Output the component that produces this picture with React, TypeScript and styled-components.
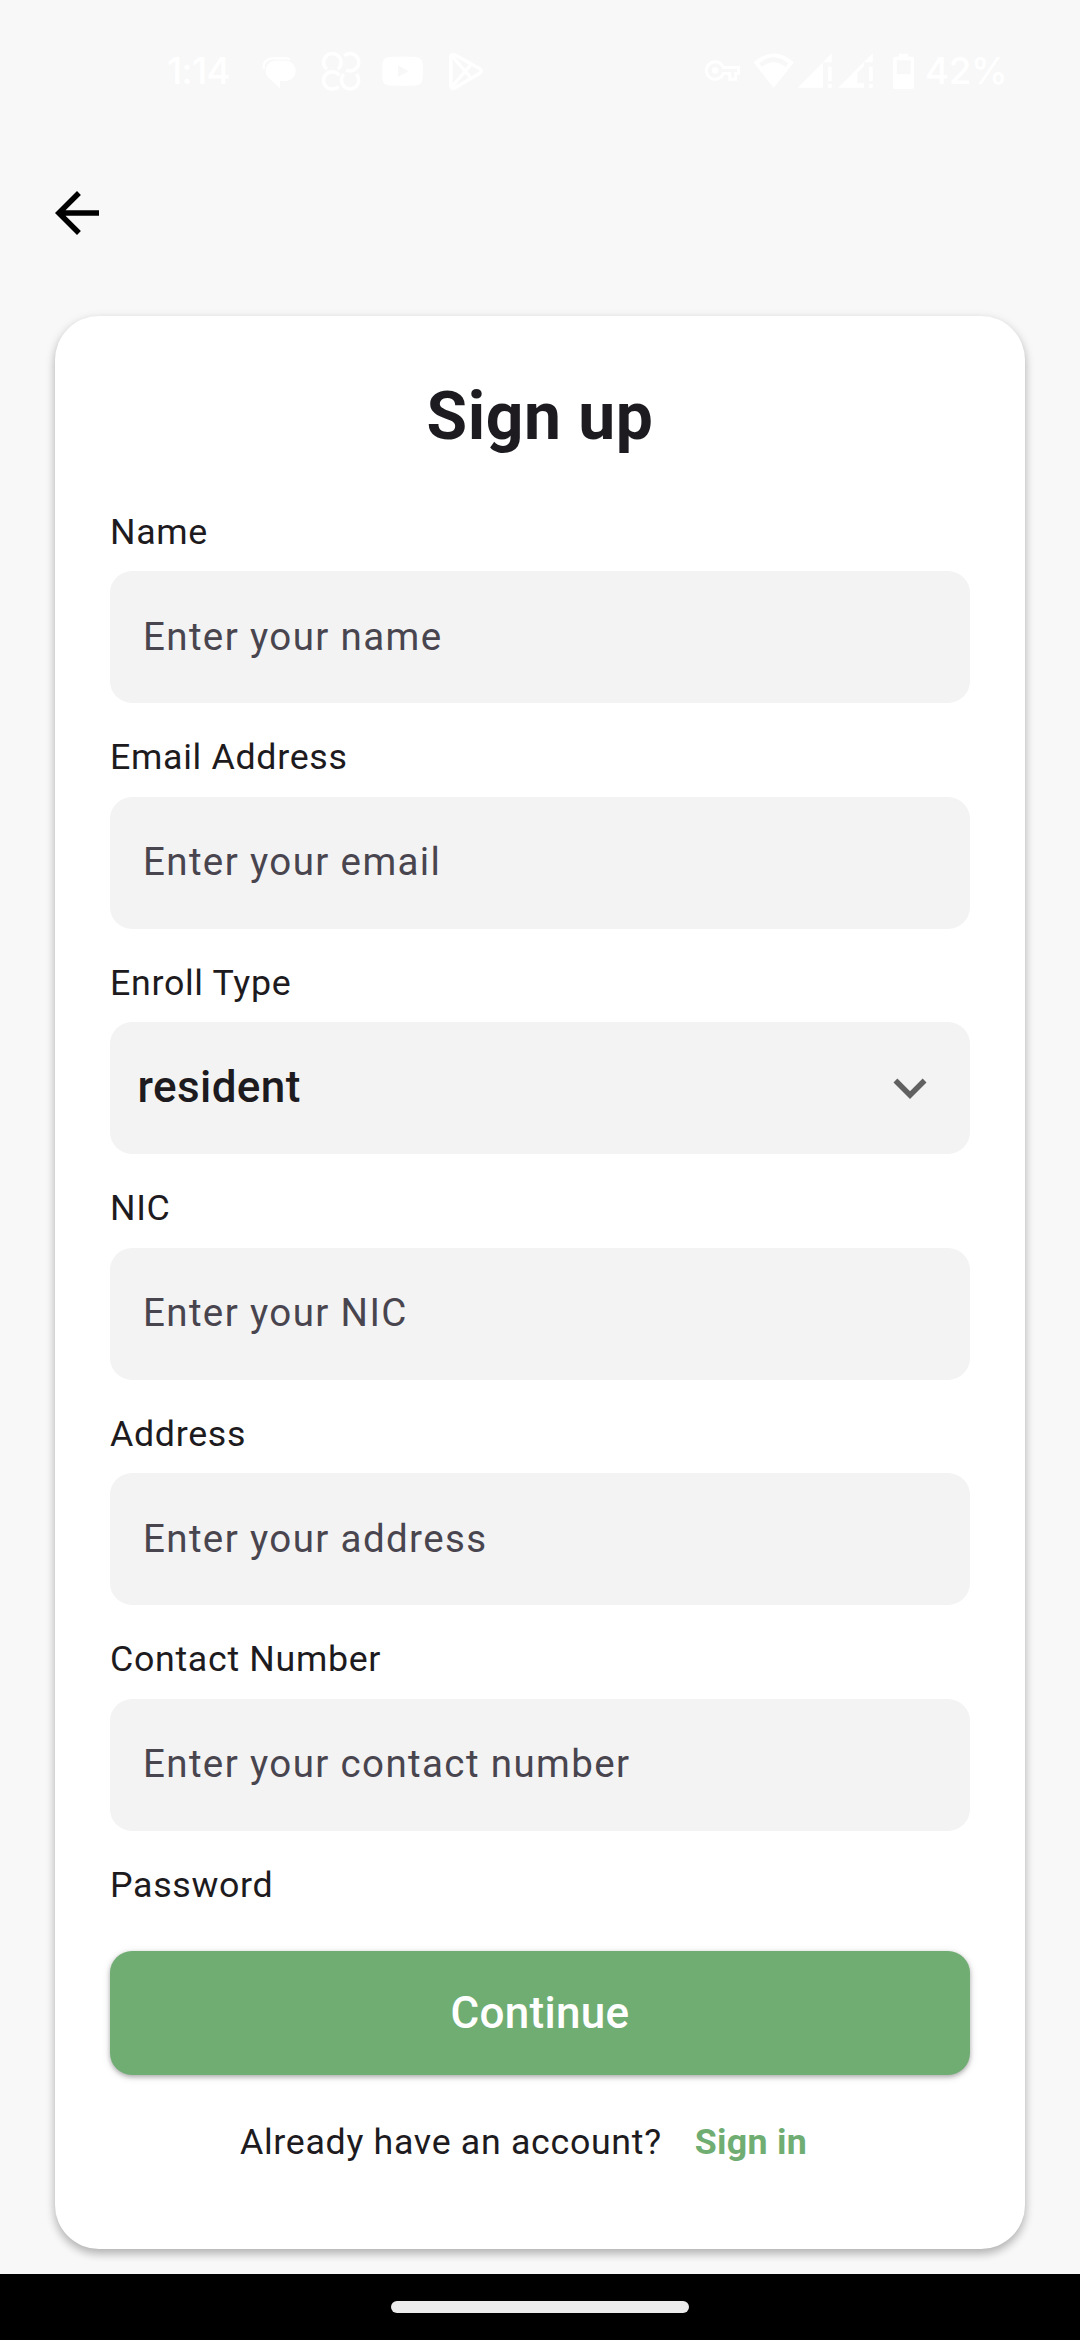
import React from "react";
import styled, { createGlobalStyle } from "styled-components";

const GlobalStyle = createGlobalStyle`
  *, *::before, *::after { box-sizing: border-box; }
  html, body { margin: 0; padding: 0; background: #f8f8f8; }
  body { font-family: Roboto, "Noto Sans", sans-serif; color: #1d1b20; }
`;

const Screen = styled.div`
  width: 1080px;
  height: 2340px;
  display: flex;
  flex-direction: column;
  background: #f8f8f8;
  overflow: hidden;
`;

const StatusBar = styled.header`
  height: 142px;
  flex: none;
  padding: 51px 77px 0 167px;
  display: flex;
  justify-content: space-between;
  align-items: flex-start;
  color: #ffffff;
`;

const StatusGroup = styled.div`
  display: flex;
  height: 40px;
`;

const StatusText = styled.span<{ $width: number; $inset?: number; $spacing: number }>`
  width: ${(p) => p.$width}px;
  padding-left: ${(p) => p.$inset ?? 0}px;
  font-family: Inter, Roboto, sans-serif;
  font-size: 37px;
  font-weight: 500;
  line-height: 40px;
  letter-spacing: ${(p) => p.$spacing}px;
  white-space: nowrap;
`;

const StatusIcon = styled.svg<{ $gap: number }>`
  display: block;
  flex: none;
  height: 40px;
  margin-left: ${(p) => p.$gap}px;
  fill: currentColor;
  overflow: visible;
`;

const AppBar = styled.nav`
  height: 173.5px;
  flex: none;
  padding: 38px 44px 0;
`;

const BackButton = styled.button`
  display: block;
  width: 66px;
  height: 66px;
  padding: 0;
  border: 0;
  background: none;
  color: #000000;
`;

const Icon = styled.svg`
  display: block;
  width: 66px;
  height: 66px;
  fill: currentColor;
`;

const Card = styled.main`
  height: 1933px;
  flex: none;
  margin: 0 55px;
  padding: 62.5px 55px 0;
  display: flex;
  flex-direction: column;
  background: #ffffff;
  border-radius: 44px;
  box-shadow: 0 5px 8px rgba(0, 0, 0, 0.2), 0 3px 12px rgba(0, 0, 0, 0.12);
`;

const Title = styled.h1`
  margin: 0 0 55.6px;
  font-size: 66px;
  line-height: 77px;
  font-weight: 700;
  letter-spacing: 0.5px;
  text-align: center;
`;

const Form = styled.div`
  height: 1413px;
  flex: none;
  display: flex;
  flex-direction: column;
  gap: 33px;
  overflow: hidden;
`;

const Field = styled.div`
  display: flex;
  flex-direction: column;
  gap: 18px;
`;

const Label = styled.label`
  font-size: 35.75px;
  line-height: 42.5px;
  letter-spacing: 0.6875px;
`;

const Box = styled.div<{ $inset: number }>`
  height: 132px;
  padding: 0 27.5px 0 ${(p) => p.$inset}px;
  display: flex;
  align-items: center;
  justify-content: space-between;
  border-radius: 22px;
  background: #f3f3f3;
`;

const Placeholder = styled.span`
  padding-bottom: 1px;
  font-size: 38.5px;
  line-height: 44px;
  letter-spacing: 1.375px;
  color: #49454f;
`;

const Selected = styled.span`
  padding-bottom: 3px;
  font-size: 44px;
  line-height: 52px;
  font-weight: 500;
  letter-spacing: 0.4px;
`;

const Chevron = styled(Icon)`
  color: #616161;
`;

const ContinueButton = styled.button`
  height: 124px;
  flex: none;
  margin-top: 27.2px;
  padding: 0;
  border: 0;
  border-radius: 22px;
  background: #70ad73;
  color: #ffffff;
  font-family: inherit;
  font-size: 44px;
  line-height: 52px;
  font-weight: 500;
  letter-spacing: 0.275px;
  box-shadow: 0 2px 4px rgba(0, 0, 0, 0.24), 0 2px 8px rgba(0, 0, 0, 0.14);
`;

const Footer = styled.div`
  margin-top: 46px;
  display: flex;
  justify-content: center;
  font-size: 35.75px;
  line-height: 42px;
`;

const Prompt = styled.span`
  letter-spacing: 0.6875px;
`;

const SignIn = styled.a`
  padding: 0 33px;
  font-weight: 700;
  letter-spacing: 0.275px;
  color: #70ad73;
`;

const NavigationBar = styled.footer`
  height: 66px;
  flex: none;
  margin-top: auto;
  display: flex;
  justify-content: center;
  align-items: center;
  background: #000000;
`;

const HomeHandle = styled.div`
  width: 298px;
  height: 12px;
  border-radius: 6px;
  background: #ececec;
`;

type FieldSpec = { label: string; placeholder?: string; value?: string };

const fields: FieldSpec[] = [
  { label: "Name", placeholder: "Enter your name" },
  { label: "Email Address", placeholder: "Enter your email" },
  { label: "Enroll Type", value: "resident" },
  { label: "NIC", placeholder: "Enter your NIC" },
  { label: "Address", placeholder: "Enter your address" },
  { label: "Contact Number", placeholder: "Enter your contact number" },
  { label: "Password" },
];

function FormField({ label, placeholder, value }: FieldSpec) {
  return (
    <Field>
      <Label>{label}</Label>
      {placeholder && (
        <Box $inset={33}>
          <Placeholder>{placeholder}</Placeholder>
        </Box>
      )}
      {value && (
        <Box $inset={27.5}>
          <Selected>{value}</Selected>
          <Chevron viewBox="0 0 24 24">
            <path d="M7.41 8.59 12 13.17l4.59-4.58L18 10l-6 6-6-6z" />
          </Chevron>
        </Box>
      )}
    </Field>
  );
}

function SystemStatus() {
  return (
    <StatusBar>
      <StatusGroup>
        <StatusText $width={95} $spacing={-0.8}>1:14</StatusText>
        <StatusIcon $gap={0} width="34" viewBox="0 0 34 40">
          <path d="M13.7 9.7h10a10.1 10.1 0 0 1 0 20.3H18v7.3L8 28A10.1 10.1 0 0 1 13.700 9.700z" />
          <path d="M1.800 18C1 11 5 7.300 11 7.300h13c2 0 3 .4 4 1.200" fill="none" stroke="currentColor" strokeWidth="2.2" />
        </StatusIcon>
        <StatusIcon $gap={25} width="40" viewBox="0 0 40 40">
          <g fill="none" stroke="currentColor" strokeWidth="3.5">
            <path d="M6 18.200a8.700 8.700 0 1 1 10.800-.2" />
            <path d="M23.300 4.800a8.700 8.700 0 1 1 1.900 14.200" />
            <path d="M18.400 24.400a8.700 8.700 0 1 0-.8 11" />
            <path d="M22.800 23.200a8.700 8.700 0 1 0 12.600 0" />
          </g>
        </StatusIcon>
        <StatusIcon $gap={21} width="41" viewBox="0 0 41 40">
          <path fillRule="evenodd" d="M7 5.900Q20.500 5 34 5.900q5.800.4 6.500 6.100.8 8.200 0 16.200-.7 5.700-6.500 6.200-13.500.8-27 0Q1.200 33.900.5 28.200-.3 20.200.5 12 1.200 6.300 7 5.900zM16 14.300V26l10.700-5.800z" />
        </StatusIcon>
        <StatusIcon $gap={25} width="36" viewBox="0 0 36 40">
          <g fill="none" stroke="currentColor" strokeWidth="3.4" strokeLinejoin="round">
            <path d="M2.800 5.500Q3.200 2.500 6.600 3.800L31.500 17.500Q34.800 20 31.500 22.500L7 36.800Q3.200 38.300 2.800 35z" />
            <path d="M4 5 23.500 27.500M4 35.500 23.500 13" />
          </g>
        </StatusIcon>
      </StatusGroup>
      <StatusGroup>
        <StatusIcon $gap={0} width="35" viewBox="0 -1.3 24 27.4">
          <path d="M22 19h-6v-4h-2.680c-1.140 2.420-3.600 4-6.320 4-3.860 0-7-3.140-7-7s3.140-7 7-7c2.720 0 5.170 1.580 6.320 4H24v6h-2v4zm-4-2h2v-4h2v-2H11.940l-.23-.67C11.010 8.340 9.110 7 7 7c-2.760 0-5 2.240-5 5s2.240 5 5 5c2.110 0 4.010-1.340 4.710-3.330l.23-.67H18v4zM7 14.200a2.200 2.200 0 1 1 0-4.400 2.200 2.200 0 0 1 0 4.400z" />
        </StatusIcon>
        <StatusIcon $gap={13} width="41" viewBox="0 0 41 40">
          <path fillRule="evenodd" d="M.5 11.300Q20.700-6.500 41 11.300L20.700 36.700zM6 12.500 9 16Q20.700 6.500 32.500 16l2.800-3.500Q20.700 0 6 12.500z" />
        </StatusIcon>
        <StatusIcon $gap={3} width="36" viewBox="0 0 36 40">
          <path d="M.7 36.700 34.700 2.300v9H26v25.400zM31 15.700h3.700V30H31zM31 33h3.700v3.700H31z" />
        </StatusIcon>
        <StatusIcon $gap={5} width="36" viewBox="0 0 36 40">
          <path d="M.3 36.700 34.700 2.300v9H26V15l-6.700 7.300v10H26v4.400zM31 15.700h3.700V30H31zM31 33h3.700v3.700H31z" />
        </StatusIcon>
        <StatusIcon $gap={19} width="21" viewBox="0 0 21 40">
          <path fillRule="evenodd" d="M6 2.700h9v3h4a2 2 0 0 1 2 2V36a2 2 0 0 1-2 2H2a2 2 0 0 1-2-2V7.700a2 2 0 0 1 2-2h4zM3.700 9.300v14h14v-14z" />
        </StatusIcon>
        <StatusText $width={89} $inset={11} $spacing={-0.5}>42%</StatusText>
      </StatusGroup>
    </StatusBar>
  );
}

export default function App() {
  return (
    <Screen>
      <GlobalStyle />
      <SystemStatus />
      <AppBar>
        <BackButton aria-label="Back">
          <Icon viewBox="0 0 24 24">
            <path d="M20 11H7.830l5.590-5.590L12 4l-8 8 8 8 1.410-1.410L7.830 13H20v-2z" />
          </Icon>
        </BackButton>
      </AppBar>
      <Card>
        <Title>Sign up</Title>
        <Form>
          {fields.map((field) => (
            <FormField key={field.label} {...field} />
          ))}
        </Form>
        <ContinueButton>Continue</ContinueButton>
        <Footer>
          <Prompt>Already have an account?</Prompt>
          <SignIn>Sign in</SignIn>
        </Footer>
      </Card>
      <NavigationBar>
        <HomeHandle />
      </NavigationBar>
    </Screen>
  );
}
